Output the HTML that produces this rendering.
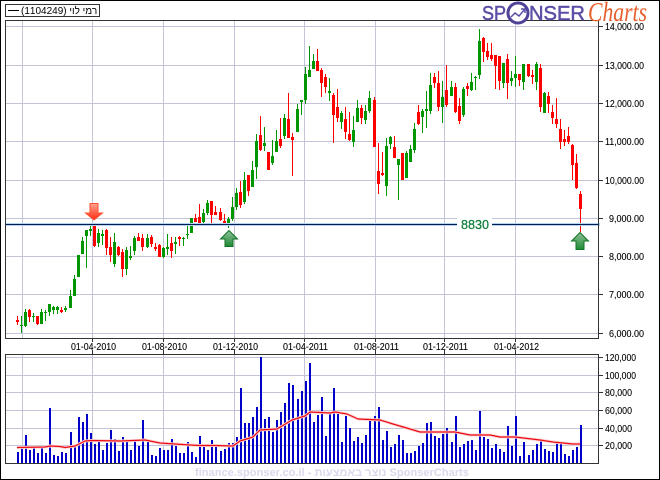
<!DOCTYPE html>
<html><head><meta charset="utf-8"><title>Chart</title>
<style>
html,body{margin:0;padding:0;background:#fff}
svg{display:block}
text{font-family:"Liberation Sans","Noto Sans CJK JP",sans-serif}
</style></head><body>
<svg width="660" height="480" viewBox="0 0 660 480" xmlns="http://www.w3.org/2000/svg">
<defs>
<linearGradient id="gd" x1="0" y1="0" x2="0" y2="1"><stop offset="0" stop-color="#ffa490"/><stop offset="1" stop-color="#ff2a10"/></linearGradient>
<linearGradient id="gu" x1="0" y1="0" x2="0" y2="1"><stop offset="0" stop-color="#8fc09a"/><stop offset="1" stop-color="#1f8a35"/></linearGradient>
</defs>
<rect x="0.5" y="0.5" width="659" height="479" fill="#fff" stroke="#000"/>
<g shape-rendering="crispEdges">
<path fill="none" stroke="#c4c4d8" d="M22.5 20V338M92.5 20V338M163.5 20V338M234.5 20V338M304.5 20V338M375.5 20V338M444.5 20V338M515.5 20V338M5 26.5H598M5 65.5H598M5 103.5H598M5 141.5H598M5 180.5H598M5 218.5H598M5 256.5H598M5 294.5H598M5 333.5H598"/>
<path fill="none" stroke="#c4c4d8" d="M22.5 354V463M92.5 354V463M163.5 354V463M234.5 354V463M304.5 354V463M375.5 354V463M444.5 354V463M515.5 354V463M5 357.5H598M5 375.5H598M5 392.5H598M5 410.5H598M5 428.5H598M5 445.5H598"/>
<path fill="none" stroke="#333" d="M598.5 26.5H603M598.5 65.5H603M598.5 103.5H603M598.5 141.5H603M598.5 180.5H603M598.5 218.5H603M598.5 256.5H603M598.5 294.5H603M598.5 333.5H603M598.5 357.5H603M598.5 375.5H603M598.5 392.5H603M598.5 410.5H603M598.5 428.5H603M598.5 445.5H603M92.5 338V342M163.5 338V342M234.5 338V342M304.5 338V342M375.5 338V342M444.5 338V342M515.5 338V342M92.5 350V354M163.5 350V354M234.5 350V354M304.5 350V354M375.5 350V354M444.5 350V354M515.5 350V354"/>
<path fill="none" stroke="#0000c8" stroke-width="2" d="M18 452V463M22 447V463M26 435V463M30 450V463M34 446V463M38 453V463M42 447V463M46 453V463M50 408V463M54 455V463M58 456V463M62 452V463M66 453V463M71 432V463M75 447V463M79 417V463M83 422V463M87 414V463M91 433V463M95 444V463M99 442V463M103 450V463M107 443V463M111 430V463M115 439V463M119 451V463M123 437V463M127 440V463M131 450V463M135 440V463M139 446V463M143 420V463M148 440V463M152 455V463M156 456V463M160 448V463M164 450V463M168 450V463M172 439V463M176 446V463M180 453V463M184 453V463M188 442V463M192 452V463M196 457V463M200 436V463M204 445V463M208 450V463M212 440V463M216 447V463M221 451V463M225 449V463M229 443V463M233 443V463M237 437V463M241 388V463M245 423V463M249 423V463M253 417V463M257 407V463M261 357V463M265 419V463M269 417V463M273 432V463M277 420V463M281 412V463M285 403V463M289 383V463M293 385V463M298 399V463M302 391V463M306 381V463M310 363V463M314 422V463M318 415V463M322 397V463M326 436V463M330 412V463M334 388V463M338 413V463M342 442V463M346 416V463M350 428V463M354 441V463M358 437V463M362 443V463M366 435V463M370 418V463M375 416V463M379 407V463M383 440V463M387 431V463M391 447V463M395 444V463M399 435V463M403 440V463M407 453V463M411 453V463M415 451V463M419 446V463M423 443V463M427 423V463M431 422V463M435 436V463M439 438V463M443 434V463M447 428V463M452 442V463M456 416V463M460 447V463M464 444V463M468 441V463M472 440V463M476 450V463M480 411V463M484 437V463M488 439V463M492 448V463M496 444V463M500 449V463M504 452V463M508 426V463M512 446V463M516 416V463M520 456V463M524 442V463M529 455V463M533 450V463M537 444V463M541 440V463M545 449V463M549 451V463M553 452V463M557 443V463M561 442V463M565 454V463M569 456V463M573 450V463M577 447V463M581 425V463"/>
<path fill="none" stroke="#009600" d="M21.5 316V333M25.5 309V327M33.5 313V322M41.5 309V324M45.5 310V321M49.5 304V316M53.5 306V314M57.5 306V314M65.5 306V312M70.5 290V308M74.5 275V296M78.5 255V277M82.5 237V254M86.5 230V268M90.5 225V236M98.5 229V247M102.5 230V245M114.5 233V267M126.5 247V275M130.5 246V260M134.5 236V255M147.5 234V248M163.5 247V258M167.5 234V255M175.5 237V254M183.5 237V246M187.5 225V239M191.5 218V233M203.5 209V223M207.5 200V215M228.5 217V228M232.5 197V221M236.5 188V210M244.5 172V204M252.5 161V187M256.5 134V179M264.5 127V151M272.5 140V165M276.5 130V152M284.5 114V139M297.5 104V132M301.5 100V115M305.5 67V104M309.5 46V77M313.5 54V69M329.5 78V101M341.5 111V129M353.5 116V147M357.5 100V122M365.5 105V124M369.5 91V113M386.5 138V196M390.5 136V149M398.5 159V200M406.5 151V178M410.5 145V162M414.5 123V153M422.5 109V133M426.5 91V128M430.5 73V114M442.5 81V123M451.5 81V96M463.5 87V117M471.5 73V91M475.5 76V90M479.5 29V79M503.5 63V88M511.5 71V86M515.5 56V87M523.5 64V90M536.5 62V90M544.5 92V113"/>
<path fill="none" stroke="#009600" stroke-width="3" d="M21.5 325V326M25.5 312V326M33.5 316V317M41.5 312V324M45.5 312V313M49.5 304V312M53.5 307V310M57.5 307V310M65.5 308V310M70.5 296V308M74.5 279V296M78.5 255V277M82.5 241V254M86.5 230V236M90.5 229V231M98.5 233V243M102.5 234V236M114.5 242V264M126.5 250V269M130.5 256V258M134.5 238V251M147.5 238V247M163.5 248V257M167.5 247V249M175.5 242V244M183.5 238V239M187.5 234V235M191.5 218V233M203.5 213V222M207.5 203V213M228.5 219V224M232.5 207V219M236.5 193V207M244.5 180V202M252.5 170V187M256.5 141V167M264.5 143V146M272.5 156V163M276.5 141V152M284.5 118V136M297.5 109V132M301.5 100V102M305.5 74V100M309.5 70V77M313.5 61V69M329.5 91V93M341.5 113V122M353.5 130V142M357.5 108V122M365.5 111V120M369.5 98V111M386.5 146V186M390.5 137V144M398.5 159V165M406.5 153V178M410.5 149V162M414.5 129V150M422.5 111V117M426.5 109V111M430.5 85V111M442.5 97V107M451.5 87V96M463.5 89V115M471.5 82V90M475.5 77V78M479.5 41V75M503.5 63V83M511.5 78V81M515.5 74V78M523.5 64V82M536.5 64V82M544.5 93V113"/>
<path fill="none" stroke="#ff0000" d="M17.5 316V325M29.5 309V322M37.5 316V325M61.5 307V313M94.5 225V247M106.5 229V255M110.5 237V262M118.5 246V256M122.5 249V277M138.5 233V241M142.5 234V251M151.5 235V247M155.5 243V251M159.5 244V257M171.5 237V258M179.5 236V246M195.5 214V222M199.5 204V223M211.5 201V223M215.5 206V215M220.5 208V221M224.5 214V224M240.5 181V208M248.5 175V196M260.5 116V151M268.5 152V170M280.5 118V148M288.5 93V138M292.5 133V176M317.5 49V71M321.5 68V97M325.5 74V93M333.5 93V143M337.5 89V122M345.5 107V139M349.5 112V141M361.5 105V124M374.5 97V147M378.5 143V194M382.5 152V176M394.5 136V158M402.5 153V180M418.5 105V125M434.5 73V88M438.5 71V111M446.5 65V107M455.5 83V113M459.5 98V124M467.5 83V96M483.5 37V62M487.5 43V60M491.5 43V61M495.5 55V89M499.5 56V90M507.5 54V99M519.5 74V86M528.5 64V77M532.5 70V84M540.5 64V112M548.5 92V113M552.5 105V124M556.5 98V128M560.5 119V149M564.5 130V146M568.5 127V144M572.5 144V180M576.5 154V189M580.5 191V232"/>
<path fill="none" stroke="#ff0000" stroke-width="3" d="M17.5 320V322M29.5 310V317M37.5 316V324M61.5 310V312M94.5 225V246M106.5 230V248M110.5 247V255M118.5 247V255M122.5 252V269M138.5 237V241M142.5 238V247M151.5 237V244M155.5 247V249M159.5 245V257M171.5 243V251M179.5 237V239M195.5 218V222M199.5 217V223M211.5 201V215M215.5 212V215M220.5 212V220M224.5 221V223M240.5 192V205M248.5 175V191M260.5 135V150M268.5 152V170M280.5 139V146M288.5 119V138M292.5 137V140M317.5 61V71M321.5 70V83M325.5 77V87M333.5 95V115M337.5 107V118M345.5 119V132M349.5 134V140M361.5 108V118M374.5 100V147M378.5 171V184M382.5 173V175M394.5 147V158M402.5 153V180M418.5 112V124M434.5 77V83M438.5 83V107M446.5 90V105M455.5 87V112M459.5 106V121M467.5 86V89M483.5 38V52M487.5 51V57M491.5 55V59M495.5 55V66M499.5 56V81M507.5 59V83M519.5 74V80M528.5 64V76M532.5 75V77M540.5 68V107M548.5 96V104M552.5 112V118M556.5 119V124M560.5 129V142M564.5 139V142M568.5 136V142M572.5 145V165M576.5 163V188M580.5 194V209"/>
<rect x="5" y="223" width="595" height="3" fill="#b4d4f4"/>
<rect x="5" y="224" width="593" height="1" fill="#001c50"/>
<rect x="457" y="218" width="35" height="13" fill="#fff"/>
<path fill="none" stroke="#333" d="M5.5 20.5H598.5V338.5H5.5ZM5.5 354.5H598.5V463.5H5.5Z"/>
<rect x="5.5" y="4.5" width="94" height="12" fill="#fff" stroke="#333"/>
<rect x="8" y="10" width="11" height="1" fill="#000"/>
</g>
<polyline fill="none" stroke="#f8d4d4" stroke-width="3" stroke-linejoin="round" points="17,447.5 45,447 50,446 60,446.5 65,447.5 75,446 85,441 92,440.5 120,441 145,440 160,443 175,444 190,445 200,445.5 215,445.5 233,446 240,441 253,437 260,430 277,429 292,420 305,416 310,412 330,413 335,412 347,414 358,419 380,420 393,424 410,429 420,432 455,432 470,435 490,435 500,437 515,437 540,440 553,442 573,444 580,444"/>
<polyline fill="none" stroke="#ee0a14" stroke-width="1.2" stroke-linejoin="round" points="17,447.5 45,447 50,446 60,446.5 65,447.5 75,446 85,441 92,440.5 120,441 145,440 160,443 175,444 190,445 200,445.5 215,445.5 233,446 240,441 253,437 260,430 277,429 292,420 305,416 310,412 330,413 335,412 347,414 358,419 380,420 393,424 410,429 420,432 455,432 470,435 490,435 500,437 515,437 540,440 553,442 573,444 580,444"/>
<path d="M90 203.5H98V213H102.5L94 220L85.5 213H90Z" fill="url(#gd)" stroke="#ff5030"/>
<path d="M229 230.5L237.5 239H233V246.5H225V239H220.5Z" fill="url(#gu)" stroke="#0f7322"/>
<path d="M580 232.5L588.5 241H584V249.5H576V241H571.5Z" fill="url(#gu)" stroke="#0f7322"/>
<g fill="#000" font-size="10" stroke="#000" stroke-width="0.1">
<text x="605" y="30" textLength="39" lengthAdjust="spacingAndGlyphs">14,000.00</text>
<text x="605" y="69" textLength="39" lengthAdjust="spacingAndGlyphs">13,000.00</text>
<text x="605" y="107" textLength="39" lengthAdjust="spacingAndGlyphs">12,000.00</text>
<text x="605" y="145" textLength="39" lengthAdjust="spacingAndGlyphs">11,000.00</text>
<text x="605" y="184" textLength="39" lengthAdjust="spacingAndGlyphs">10,000.00</text>
<text x="609" y="222" textLength="35" lengthAdjust="spacingAndGlyphs">9,000.00</text>
<text x="609" y="260" textLength="35" lengthAdjust="spacingAndGlyphs">8,000.00</text>
<text x="609" y="298" textLength="35" lengthAdjust="spacingAndGlyphs">7,000.00</text>
<text x="609" y="337" textLength="35" lengthAdjust="spacingAndGlyphs">6,000.00</text>
<text x="605" y="361" textLength="31" lengthAdjust="spacingAndGlyphs">120,000</text>
<text x="605" y="379" textLength="31" lengthAdjust="spacingAndGlyphs">100,000</text>
<text x="605" y="396" textLength="27" lengthAdjust="spacingAndGlyphs">80,000</text>
<text x="605" y="414" textLength="27" lengthAdjust="spacingAndGlyphs">60,000</text>
<text x="605" y="432" textLength="27" lengthAdjust="spacingAndGlyphs">40,000</text>
<text x="605" y="449" textLength="27" lengthAdjust="spacingAndGlyphs">20,000</text>
<text x="71" y="350" textLength="45" lengthAdjust="spacingAndGlyphs">01-04-2010</text>
<text x="142" y="350" textLength="45" lengthAdjust="spacingAndGlyphs">01-08-2010</text>
<text x="213" y="350" textLength="45" lengthAdjust="spacingAndGlyphs">01-12-2010</text>
<text x="283" y="350" textLength="45" lengthAdjust="spacingAndGlyphs">01-04-2011</text>
<text x="354" y="350" textLength="45" lengthAdjust="spacingAndGlyphs">01-08-2011</text>
<text x="423" y="350" textLength="45" lengthAdjust="spacingAndGlyphs">01-12-2011</text>
<text x="494" y="350" textLength="45" lengthAdjust="spacingAndGlyphs">01-04-2012</text>
</g>
<text x="21" y="14" font-size="10" fill="#000">(1104249) רמי לוי</text>
<text x="461" y="229" font-size="13" fill="#0f7f3a" stroke="#0f7f3a" stroke-width="0.25" textLength="28" lengthAdjust="spacingAndGlyphs">8830</text>
<text x="195" y="476" font-size="11" font-weight="bold" fill="#d8d8ec" letter-spacing="0.04">finance.sponser.co.il - נוצר באמצעות SponserCharts</text>
<text x="482" y="20" font-size="20" fill="#5a4ea6" stroke="#5a4ea6" stroke-width="0.5" textLength="24" lengthAdjust="spacingAndGlyphs">SP</text>
<text x="529" y="20" font-size="20" fill="#5a4ea6" stroke="#5a4ea6" stroke-width="0.5" textLength="56" lengthAdjust="spacingAndGlyphs">NSER</text>
<circle cx="518" cy="13" r="10" fill="#fff" stroke="#4f4398" stroke-width="3"/>
<path d="M511 17L515 13L519 16L525 9M521 9H525V13" fill="none" stroke="#5a4ea6" stroke-width="1.5"/>
<text x="588" y="21" font-size="27" font-style="italic" fill="#e8602c" style="font-family:'Liberation Serif',serif" textLength="59" lengthAdjust="spacingAndGlyphs">Charts</text>
</svg>
</body></html>
